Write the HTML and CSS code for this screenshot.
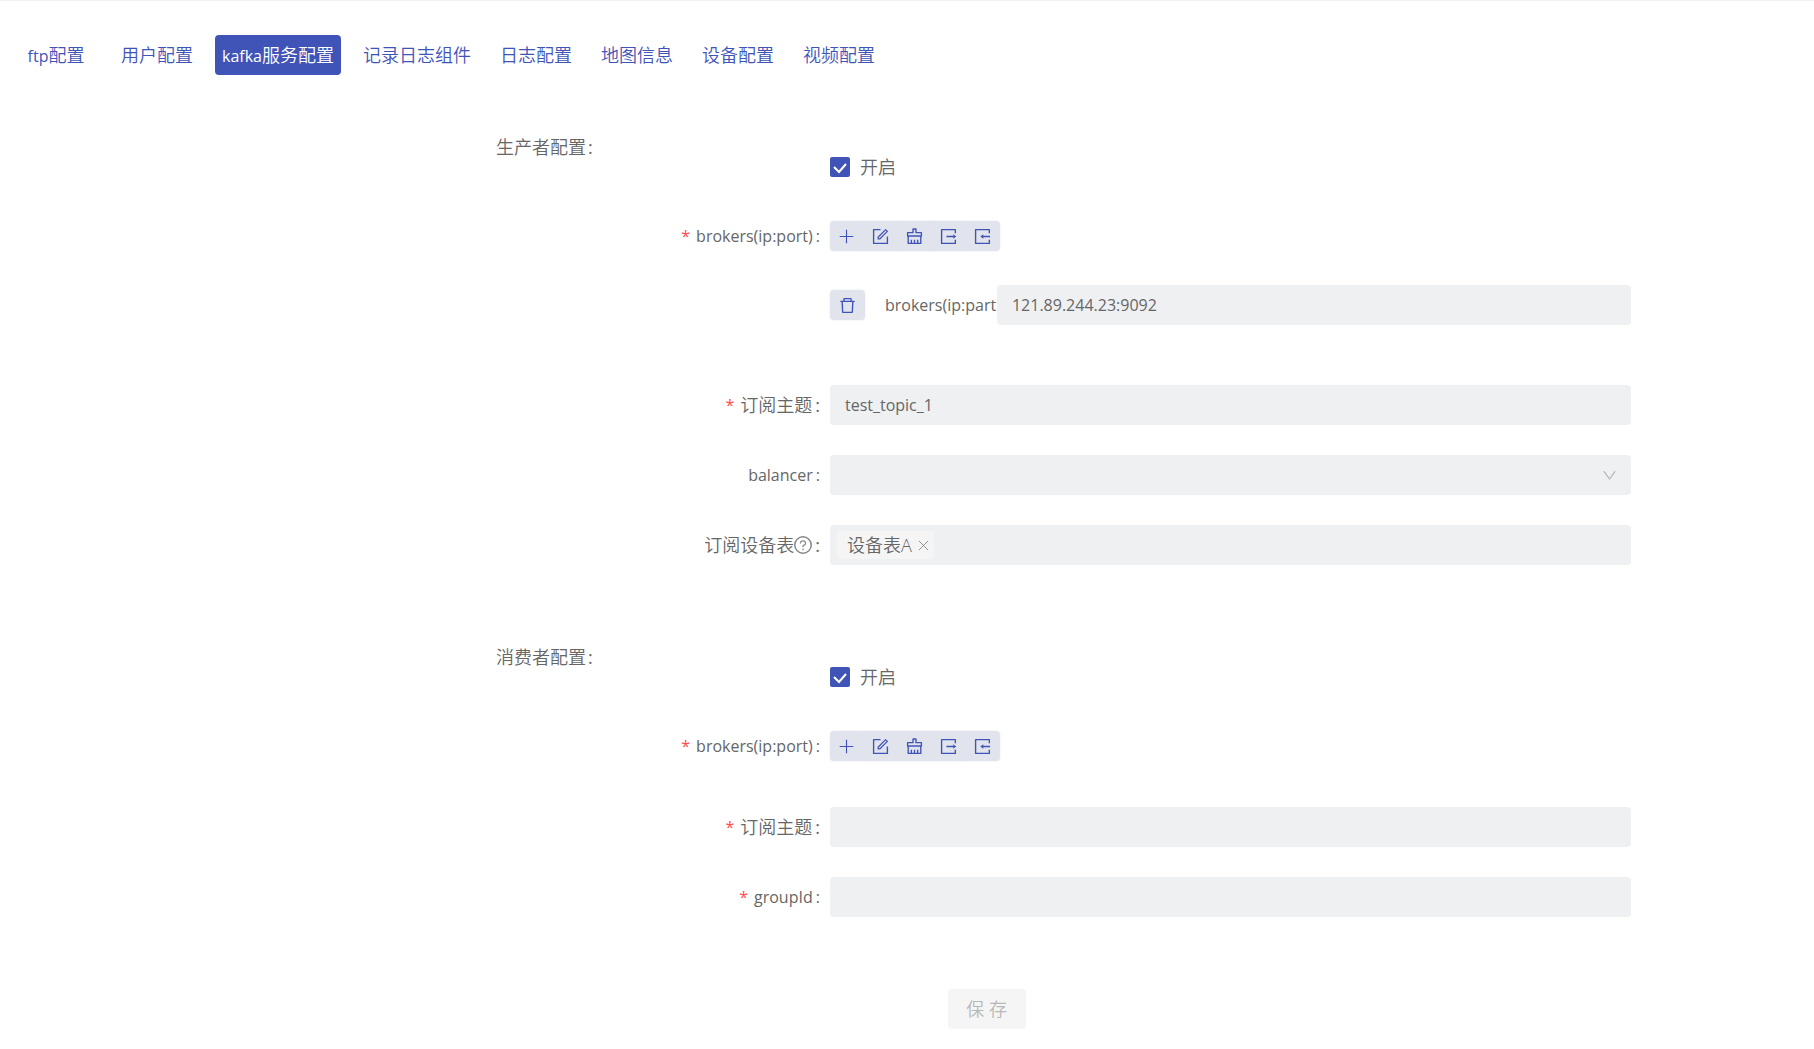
FILE: index.html
```html
<!DOCTYPE html>
<html lang="zh-CN">
<head>
<meta charset="utf-8">
<title>kafka服务配置</title>
<link rel="stylesheet" href="styles.css">
</head>
<body>
<svg class="sprite" aria-hidden="true">
  <symbol id="i-plus" viewBox="64 64 896 896"><path d="M482 152h60v720h-60zM152 482h720v60h-720z"/></symbol>
  <symbol id="i-form" viewBox="64 64 896 896"><path d="M904 512h-56c-4.4 0-8 3.6-8 8v320H184V184h320c4.4 0 8-3.6 8-8v-56c0-4.4-3.6-8-8-8H144c-17.7 0-32 14.3-32 32v736c0 17.7 14.3 32 32 32h736c17.7 0 32-14.3 32-32V520c0-4.4-3.6-8-8-8z"/><path d="M355.9 534.9L354 653.8c-.1 8.9 7.1 16.2 16 16.2h.4l118-2.9c2-.1 4-.9 5.4-2.3l415.9-415c3.1-3.1 3.1-8.2 0-11.3L785.4 114.3c-1.6-1.6-3.6-2.3-5.7-2.3s-4.1.8-5.7 2.3l-415.8 415a8.3 8.3 0 00-2.3 5.6zm63.5 23.6L779.7 199l45.2 45.1-360.5 359.7-45.7 1.1.7-46.4z"/></symbol>
  <symbol id="i-clear" viewBox="64 64 896 896"><path fill="none" stroke="currentColor" stroke-width="72" stroke-linejoin="round" d="M148 484V310H434V118H590V310H876V484ZM180 484V876H844V484M346 876V680M512 876V680M678 876V680"/></symbol>
  <symbol id="i-export" viewBox="64 64 896 896"><path fill="none" stroke="currentColor" stroke-width="72" stroke-linejoin="round" d="M872 336V148H148V876H872V688M400 512H800"/><path d="M765 390L920 512 765 634z"/></symbol>
  <symbol id="i-import" viewBox="64 64 896 896"><path fill="none" stroke="currentColor" stroke-width="72" stroke-linejoin="round" d="M872 336V148H148V876H872V688M520 512H912"/><path d="M555 390L400 512 555 634z"/></symbol>
  <symbol id="i-delete" viewBox="64 64 896 896"><path d="M360 184h-8c4.400 0 8-3.600 8-8v8h304v-8c0 4.400 3.600 8 8 8h-8v72h72v-80c0-35.300-28.700-64-64-64H352c-35.300 0-64 28.700-64 64v80h72v-72zm504 72H160c-17.700 0-32 14.300-32 32v32c0 4.400 3.600 8 8 8h60.400l24.700 523c1.600 34.100 29.800 61 63.900 61h454c34.200 0 62.300-26.800 63.900-61l24.700-523H888c4.400 0 8-3.600 8-8v-32c0-17.700-14.300-32-32-32zM731.300 840H292.700l-24.200-512h487l-24.200 512z"/></symbol>
  <symbol id="i-down" viewBox="64 64 896 896"><path d="M884 256h-75c-5.1 0-9.9 2.5-12.9 6.6L512 654.2 227.9 262.6c-3-4.1-7.8-6.6-12.9-6.600h-75c-6.500 0-10.300 7.400-6.500 12.700l352.600 486.100c12.800 17.600 39 17.600 51.700 0l352.600-486.100c3.900-5.300.1-12.700-6.400-12.700z"/></symbol>
  <symbol id="i-help" viewBox="64 64 896 896"><circle cx="512" cy="512" r="410" fill="none" stroke="currentColor" stroke-width="76"/><path d="M623.6 316.7C593.6 290.4 554 276 512 276s-81.600 14.500-111.600 40.700C369.200 344 352 380.700 352 420v7.600c0 4.400 3.600 8 8 8h48c4.400 0 8-3.600 8-8V420c0-44.100 43.100-80 96-80s96 35.900 96 80c0 31.100-22 59.600-56.100 72.700-21.200 8.100-39.200 22.300-52.100 40.900-13.100 19-19.900 41.800-19.900 64.900V620c0 4.400 3.600 8 8 8h48c4.400 0 8-3.600 8-8v-22.700a48.300 48.300 0 0130.900-44.800c59-22.700 97.100-74.700 97.100-132.500.1-39.300-17.100-76-48.300-103.300zM472 732a40 40 0 1080 0 40 40 0 10-80 0z"/></symbol>
  <symbol id="i-close" viewBox="0 0 12 12"><path fill="none" stroke="currentColor" d="M1 1L11 11M11 1L1 11"/></symbol>
  <symbol id="i-check" viewBox="0 0 20 20"><path fill="none" stroke="currentColor" stroke-width="2" d="M4 10L9 15L16 7"/></symbol>
</svg>

<nav class="tabs">
  <a class="tab" href="#ftp"><span class="latin">ftp</span>配置</a>
  <a class="tab" href="#user">用户配置</a>
  <a class="tab active" href="#kafka" aria-current="page"><span class="latin">kafka</span>服务配置</a>
  <a class="tab" href="#logger">记录日志组件</a>
  <a class="tab" href="#log">日志配置</a>
  <a class="tab" href="#map">地图信息</a>
  <a class="tab" href="#device">设备配置</a>
  <a class="tab" href="#video">视频配置</a>
</nav>

<form class="form">
  <section class="section">
    <div class="row head">
      <h2 class="title">生产者配置<span class="colon">:</span></h2>
      <label class="switch"><span class="box"><input type="checkbox" checked><svg><use href="#i-check"/></svg></span>开启</label>
    </div>
    <div class="row tools">
      <span class="label latin required">brokers(ip:port)<span class="colon">:</span></span>
      <div class="toolbar">
        <button type="button" aria-label="新增"><svg><use href="#i-plus"/></svg></button>
        <button type="button" aria-label="编辑"><svg><use href="#i-form"/></svg></button>
        <button type="button" aria-label="清空"><svg><use href="#i-clear"/></svg></button>
        <button type="button" aria-label="导出"><svg><use href="#i-export"/></svg></button>
        <button type="button" aria-label="导入"><svg><use href="#i-import"/></svg></button>
      </div>
    </div>
    <div class="row list">
      <div class="broker">
        <button class="remove" type="button" aria-label="删除"><svg><use href="#i-delete"/></svg></button>
        <label class="broker-label latin" for="broker">brokers(ip:part</label>
        <input class="field latin" id="broker" type="text" value="121.89.244.23:9092">
      </div>
    </div>
    <div class="row">
      <label class="label required" for="p-topic">订阅主题<span class="colon">:</span></label>
      <input class="field latin" id="p-topic" type="text" value="test_topic_1">
    </div>
    <div class="row">
      <label class="label latin" for="balancer">balancer<span class="colon">:</span></label>
      <div class="select"><select class="field" id="balancer"><option></option></select><svg><use href="#i-down"/></svg></div>
    </div>
    <div class="row">
      <label class="label" for="devices">订阅设备表<svg class="help"><use href="#i-help"/></svg><span class="colon">:</span></label>
      <div class="field tags">
        <span class="tag">设备表A<button type="button" aria-label="移除"><svg><use href="#i-close"/></svg></button></span>
        <input id="devices" type="text">
      </div>
    </div>
  </section>

  <section class="section">
    <div class="row head">
      <h2 class="title">消费者配置<span class="colon">:</span></h2>
      <label class="switch"><span class="box"><input type="checkbox" checked><svg><use href="#i-check"/></svg></span>开启</label>
    </div>
    <div class="row tools empty">
      <span class="label latin required">brokers(ip:port)<span class="colon">:</span></span>
      <div class="toolbar">
        <button type="button" aria-label="新增"><svg><use href="#i-plus"/></svg></button>
        <button type="button" aria-label="编辑"><svg><use href="#i-form"/></svg></button>
        <button type="button" aria-label="清空"><svg><use href="#i-clear"/></svg></button>
        <button type="button" aria-label="导出"><svg><use href="#i-export"/></svg></button>
        <button type="button" aria-label="导入"><svg><use href="#i-import"/></svg></button>
      </div>
    </div>
    <div class="row">
      <label class="label required" for="c-topic">订阅主题<span class="colon">:</span></label>
      <input class="field" id="c-topic" type="text">
    </div>
    <div class="row">
      <label class="label latin required" for="group">groupId<span class="colon">:</span></label>
      <input class="field" id="group" type="text">
    </div>
  </section>

  <div class="row">
    <div class="actions"><button class="save" type="submit" disabled>保 存</button></div>
  </div>
</form>
</body>
</html>
```
FILE: styles.css
```css
* { box-sizing: border-box; }
body {
  margin: 0;
  border-top: 1px solid #f0f1f5;
  background: #fff;
  color: #666;
  font: 350 18px/40px "Open Sans", "Noto Sans CJK SC", sans-serif;
}
button, input, select { font: inherit; color: inherit; border: 0; margin: 0; padding: 0; }
svg { display: block; width: 18px; height: 18px; fill: currentColor; }
.sprite { position: absolute; width: 0; height: 0; }
.latin { font-size: 16px; font-weight: 400; }

.tabs { display: flex; flex-wrap: wrap; gap: 15px; padding: 34px 13px 0; }
.tab {
  min-width: 86px;
  height: 40px;
  padding: 0 7px;
  border-radius: 4px;
  color: #4054b8;
  text-align: center;
  text-decoration: none;
}
.tab.active { background: #4054b8; color: #fff; }

.form { padding: 52px 10.09% 19px 27.34%; }
.section { margin-bottom: 72px; }
.row {
  display: grid;
  grid-template-columns: 334fr 801fr;
  align-items: center;
  margin-bottom: 30px;
}
.row:last-child { margin-bottom: 0; }
.head { align-items: start; margin-bottom: 29px; }
.title { margin: 0; font: inherit; }
.switch { display: flex; align-items: center; gap: 10px; padding-top: 20px; }
.box { display: grid; }
.box > * { grid-area: 1 / 1; width: 20px; height: 20px; }
.box input { appearance: none; border-radius: 2px; background: #4054b8; }
.box svg { color: #fff; pointer-events: none; }

.label { display: flex; justify-content: flex-end; align-items: center; }
.required::before { content: "*"; margin-right: 6px; color: #ff4d4f; font-size: 16px; font-weight: 400; }
.colon { margin: 0 10px 0 3px; font-weight: 400; }
.title .colon { margin: 0 0 0 2px; }
.help { color: #888; }

.tools { height: 38px; margin-bottom: 31px; }
.tools.empty { margin-bottom: 43px; }
.toolbar { display: flex; }
.toolbar button, .remove {
  display: grid;
  place-items: center;
  width: 34px;
  height: 30px;
  background: #e1e4ec;
  color: #4054b8;
  box-shadow: 0 0 2px #e1e4ec;
}
.toolbar button:first-child { border-radius: 4px 0 0 4px; }
.toolbar button:last-child { border-radius: 0 4px 4px 0; }
.toolbar svg, .remove svg { width: 17px; height: 17px; }
.list { margin-bottom: 60px; }
.broker {
  grid-column: 2;
  display: grid;
  grid-template-columns: 55px 112px 1fr;
  align-items: center;
}
.remove { width: 35px; border-radius: 4px; }
.broker-label { white-space: nowrap; }

.field {
  width: 100%;
  height: 40px;
  padding: 0 15px;
  border-radius: 4px;
  background: #eff0f2;
}
.select { display: grid; align-items: center; }
.select > * { grid-area: 1 / 1; }
.select select { appearance: none; }
.select svg { width: 15px; height: 15px; margin-right: 14px; justify-self: end; color: #bbb; pointer-events: none; }
.tags { display: flex; align-items: center; gap: 8px; padding: 0 7px; }
.tag {
  display: flex;
  align-items: center;
  gap: 6px;
  padding: 0 5px 0 10px;
  border-radius: 4px;
  background: #f5f5f5;
  line-height: 28px;
}
.tag button { background: none; color: #888; }
.tag svg { width: 11px; height: 11px; }
.tags input { flex: 1; min-width: 0; background: none; }

.actions { grid-column: 2; padding-left: 14.7%; }
.save {
  display: block;
  width: 78px;
  height: 40px;
  border-radius: 4px;
  background: #f5f5f5;
  color: #b8b8b8;
}
```
